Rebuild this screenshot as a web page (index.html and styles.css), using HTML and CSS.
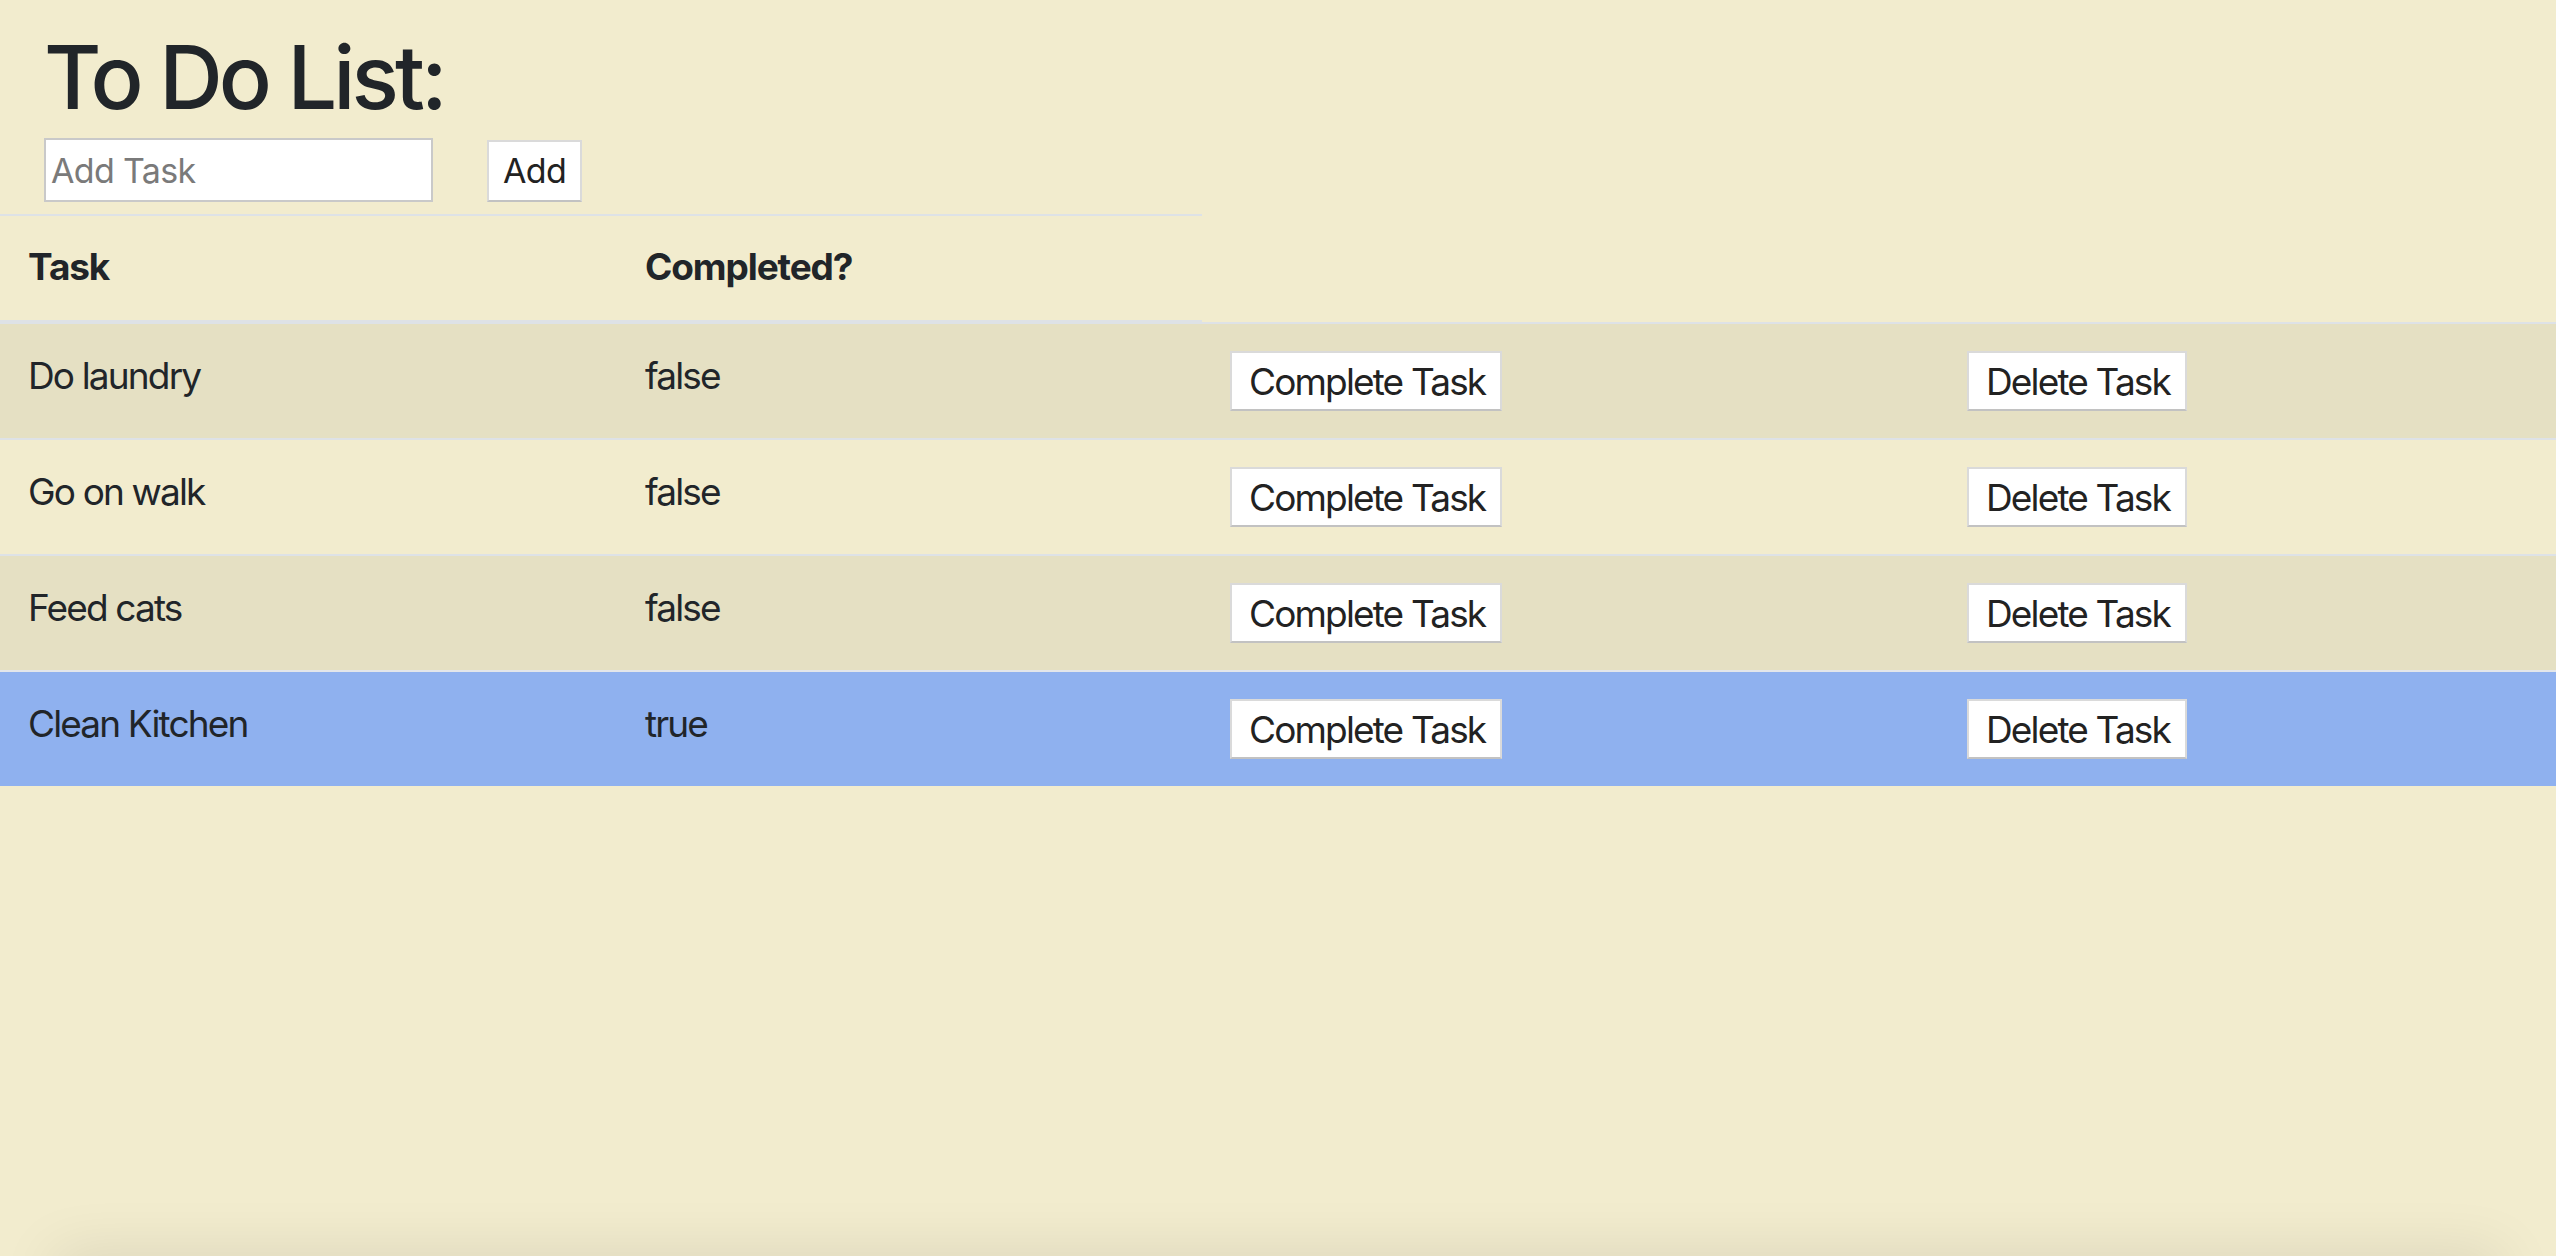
FILE: index.html
```html
<!DOCTYPE html>
<html lang="en">
<head>
<meta charset="utf-8">
<title>To Do List</title>
<link rel="stylesheet" href="styles.css">
</head>
<body>
  <header class="top">
    <h1 class="title">To Do List:</h1>
    <form class="add-form">
      <input class="add-input" type="text" placeholder="Add Task">
      <button class="btn btn-add" type="button">Add</button>
    </form>
  </header>
  <table class="tasks">
    <colgroup>
      <col class="c-task">
      <col class="c-done">
      <col class="c-complete">
      <col class="c-delete">
    </colgroup>
    <thead>
      <tr>
        <th class="head">Task</th>
        <th class="head">Completed?</th>
      </tr>
    </thead>
    <tbody>
      <tr class="row row-striped">
        <td class="cell">Do laundry</td>
        <td class="cell">false</td>
        <td class="cell cell-btn"><button class="btn" type="button">Complete Task</button></td>
        <td class="cell cell-btn"><button class="btn" type="button">Delete Task</button></td>
      </tr>
      <tr class="row">
        <td class="cell">Go on walk</td>
        <td class="cell">false</td>
        <td class="cell cell-btn"><button class="btn" type="button">Complete Task</button></td>
        <td class="cell cell-btn"><button class="btn" type="button">Delete Task</button></td>
      </tr>
      <tr class="row row-striped">
        <td class="cell">Feed cats</td>
        <td class="cell">false</td>
        <td class="cell cell-btn"><button class="btn" type="button">Complete Task</button></td>
        <td class="cell cell-btn"><button class="btn" type="button">Delete Task</button></td>
      </tr>
      <tr class="row row-done">
        <td class="cell">Clean Kitchen</td>
        <td class="cell">true</td>
        <td class="cell cell-btn"><button class="btn" type="button">Complete Task</button></td>
        <td class="cell cell-btn"><button class="btn" type="button">Delete Task</button></td>
      </tr>
    </tbody>
  </table>
</body>
</html>
```

FILE: styles.css
```css
html, body {
  height: 100%;
}

body {
  margin: 0;
  background: #f2ecce;
  color: #212529;
  font-family: Inter, "Noto Sans", "Liberation Sans", sans-serif;
  overflow: hidden;
}

body::after {
  content: "";
  position: fixed;
  left: 55px;
  right: 55px;
  bottom: -40px;
  height: 40px;
  box-shadow: 0 0 60px 0 rgba(0, 0, 0, 0.12);
  pointer-events: none;
}

.top {
  padding: 33px 0 12px 44px;
}

.title {
  margin: 0;
  font-size: 88px;
  line-height: 88px;
  font-weight: 500;
  letter-spacing: -0.045em;
  color: #212529;
}

.add-form {
  display: flex;
  align-items: flex-end;
  gap: 54px;
  margin-top: 17px;
}

.add-input {
  box-sizing: border-box;
  width: 389px;
  height: 64px;
  margin: 0;
  padding: 0 5px;
  border: 2px solid #c9c9c9;
  background: #fff;
  font-family: inherit;
  font-size: 34px;
  letter-spacing: -0.02em;
  color: #212529;
  outline: none;
}

.add-input::placeholder {
  color: #7a7a7a;
}

.btn {
  box-sizing: border-box;
  height: 60px;
  margin: 0;
  padding: 0 15px 0 17px;
  background: #fff;
  border: 2px solid #dadada;
  border-bottom-color: #c2c2c2;
  border-radius: 0;
  font-family: inherit;
  font-size: 37px;
  line-height: 1;
  letter-spacing: -0.05em;
  color: #222;
  cursor: pointer;
}

.btn-add {
  height: 62px;
  padding: 0 14px;
  font-size: 34px;
  letter-spacing: -0.02em;
}

.tasks {
  width: 100%;
  table-layout: fixed;
  border-collapse: separate;
  border-spacing: 0;
}

.c-task { width: 617px; }
.c-done { width: 585px; }
.c-complete { width: 737px; }
.c-delete { width: 617px; }

.head {
  box-sizing: border-box;
  height: 108px;
  padding: 22px 28px 0;
  border-top: 2px solid #dee2e6;
  border-bottom: 2px solid #dee2e6;
  text-align: left;
  vertical-align: top;
  font-size: 37px;
  line-height: 57px;
  font-weight: 700;
  letter-spacing: -0.03em;
}

.cell {
  box-sizing: border-box;
  height: 116px;
  padding: 23px 28px 0;
  border-top: 2px solid #dee2e6;
  vertical-align: top;
  font-size: 37px;
  line-height: 57px;
  letter-spacing: -0.05em;
}

.cell-btn {
  padding-top: 27px;
}

.row-striped {
  background: #e5e0c3;
}

.row-done {
  background: #8fb1ef;
}

.row-done .cell {
  border-top-color: #e3e6ea;
}
```
